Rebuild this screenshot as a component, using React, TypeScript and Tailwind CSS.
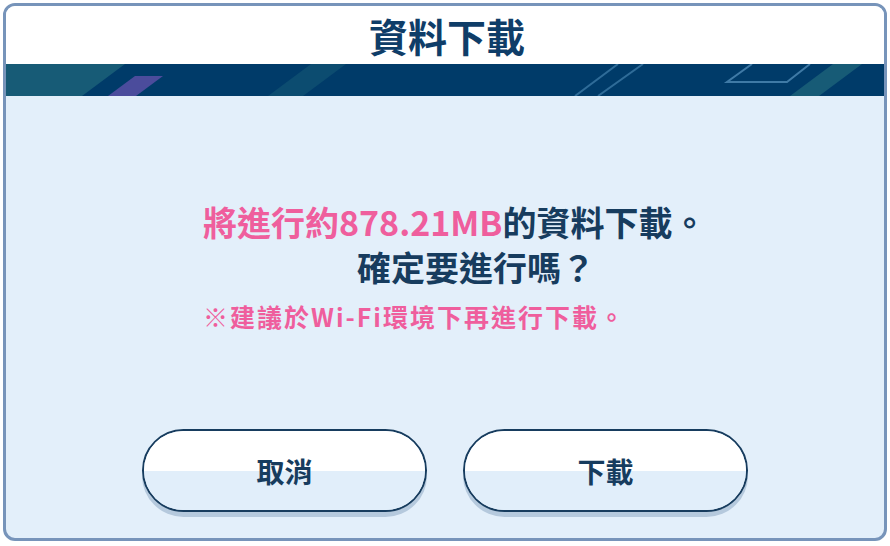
const cjk = { fontFamily: '"Noto Sans CJK TC", "Noto Sans", sans-serif' };

function Band() {
  return (
    <div className="h-[32px] bg-[#003b69] shrink-0">
      <svg width="100%" height="32" viewBox="0 0 878 32" preserveAspectRatio="none">
        <polygon points="0,0 119,0 76,32 0,32" fill="#175b76" />
        <polygon points="129,12 157,12 130,32 102,32" fill="#4b4c9c" />
        <polygon points="305,0 340,0 297,32 262,32" fill="#0c4c70" />
        <line x1="612" y1="0" x2="569" y2="32" stroke="#2f6c98" strokeWidth="2" />
        <line x1="637" y1="0" x2="592" y2="32" stroke="#2f6c98" strokeWidth="2" />
        <polyline points="746,0 721,18 781,18 804,0" fill="none" stroke="#3f7aa6" strokeWidth="2" />
        <polygon points="827,0 856,0 813,32 784,32" fill="#175b76" />
      </svg>
    </div>
  );
}

function Button({ label }: { label: string }) {
  return (
    <button
      className="relative w-[285px] h-[83px] rounded-full border-2 border-[#173c5e] overflow-hidden shadow-[0_5px_0_#b5c9dd] flex items-center justify-center"
      style={cjk}
    >
      <div className="absolute inset-0 flex flex-col">
        <div className="h-[40px] bg-white" />
        <div className="flex-1 bg-[#e1eefa]" />
      </div>
      <span className="relative text-[28px] font-bold text-[#173c5e] leading-none">{label}</span>
    </button>
  );
}

export default function App() {
  return (
    <div className="w-[890px] h-[546px] bg-white p-[3px] pb-[5px]" style={cjk}>
      <div className="h-full rounded-[12px] border-[3px] border-[#7794ba] overflow-hidden flex flex-col bg-[#e3effa]">
        <div className="h-[58px] bg-white flex items-center justify-center shrink-0">
          <h1 className="text-[39px] font-bold text-[#0f3d68] leading-none pl-[4px]">資料下載</h1>
        </div>
        <Band />
        <div className="flex-1 flex flex-col items-center">
          <div className="mt-[103px] w-[520px] pl-[18px] flex flex-col">
            <p className="text-[34px] font-bold leading-[45px] whitespace-nowrap">
              <span className="text-[#ef5e9d]">將進行約878.21MB</span>
              <span className="text-[#173c5e]">的資料下載。</span>
            </p>
            <p className="text-[34px] font-bold leading-[45px] text-[#173c5e] pl-[154px] whitespace-nowrap">確定要進行嗎？</p>
            <p className="mt-[12px] text-[25px] font-bold leading-[30px] tracking-[2px] text-[#ef5e9d] whitespace-nowrap">※建議於Wi-Fi環境下再進行下載。</p>
          </div>
          <div className="mt-[98px] flex gap-[36px]">
            <Button label="取消" />
            <Button label="下載" />
          </div>
        </div>
      </div>
    </div>
  );
}
